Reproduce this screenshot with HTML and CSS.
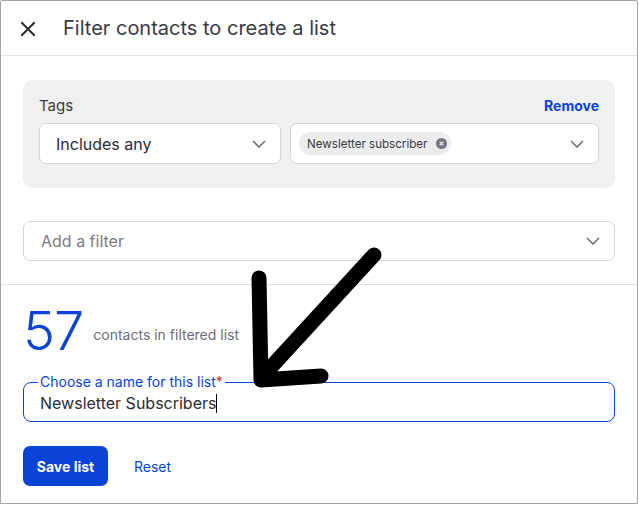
FILE: index.html
```html
<!DOCTYPE html>
<html>
<head>
<meta charset="utf-8">
<link rel="stylesheet" href="styles.css">
</head>
<body>
<div class="frame">
  <header class="header">
    <svg class="close" width="16" height="16" viewBox="0 0 16 16"><path d="M2 2 L14 14 M14 2 L2 14" stroke="#2b2b36" stroke-width="2" stroke-linecap="square"/></svg>
    <h1 class="title">Filter contacts to create a list</h1>
  </header>
  <section class="filters">
    <div class="card">
      <div class="card-head">
        <span class="card-label">Tags</span>
        <a class="link-bold">Remove</a>
      </div>
      <div class="card-row">
        <div class="select select-left">
          <span>Includes any</span>
          <svg class="chev" width="14" height="8" viewBox="0 0 14 8"><path d="M1 1 L7 7 L13 1" fill="none" stroke="#6f6f7a" stroke-width="1.6"/></svg>
        </div>
        <div class="select select-right">
          <span class="chip">Newsletter subscriber
            <svg class="chip-x" width="11" height="11" viewBox="0 0 12 12"><circle cx="6" cy="6" r="6" fill="#75757f"/><path d="M4 4 L8 8 M8 4 L4 8" stroke="#ececec" stroke-width="1.4"/></svg>
          </span>
          <svg class="chev" width="14" height="8" viewBox="0 0 14 8"><path d="M1 1 L7 7 L13 1" fill="none" stroke="#6f6f7a" stroke-width="1.6"/></svg>
        </div>
      </div>
    </div>
    <div class="select add-filter">
      <span>Add a filter</span>
      <svg class="chev" width="14" height="8" viewBox="0 0 14 8"><path d="M1 1 L7 7 L13 1" fill="none" stroke="#6f6f7a" stroke-width="1.6"/></svg>
    </div>
  </section>
  <section class="result">
    <div class="count-row">
      <span class="count">57</span>
      <span class="count-label">contacts in filtered list</span>
    </div>
    <fieldset class="name-field">
      <legend>Choose a name for this list<span class="req">*</span></legend>
      <div class="value">Newsletter Subscribers<span class="caret"></span></div>
    </fieldset>
    <div class="actions">
      <button class="btn-primary">Save list</button>
      <a class="link">Reset</a>
    </div>
  </section>
  <svg class="arrow" width="160" height="170" viewBox="0 0 160 170"><path d="M133 22 L20 145 M18 45 L20 147 L80 143" fill="none" stroke="#000" stroke-width="15" stroke-linecap="round" stroke-linejoin="round"/></svg>
</div>
</body>
</html>
```
FILE: styles.css
```css
* { box-sizing: border-box; }
html, body { margin: 0; padding: 0; background: #fff; }
body { font-family: Inter, "Open Sans", sans-serif; color: #2b2b36; }
.frame {
  position: relative;
  width: 638px;
  height: 504px;
  border: 1px solid #a4a4a4;
  border-radius: 2px 2px 0 0;
  background: #fff;
  overflow: hidden;
}
.header {
  height: 55px;
  display: flex;
  align-items: center;
  padding-left: 19px;
  border-bottom: 1px solid #e2e2e2;
}
.close { flex: none; margin-right: 27px; margin-top: 1px; }
.title { margin: 0; font-size: 20px; font-weight: 400; color: #3a3a44; letter-spacing: 0; }
.filters {
  padding: 24px 22px 23px 22px;
  border-bottom: 1px solid #e2e2e2;
}
.card {
  background: #f0f0f0;
  border-radius: 10px;
  padding: 15px 16px 24px 16px;
}
.card-head {
  display: flex;
  justify-content: space-between;
  align-items: center;
  height: 20px;
  margin-bottom: 8px;
}
.card-label { font-size: 15px; color: #3a3a44; }
.link-bold { color: #0a43d8; font-weight: 700; font-size: 14px; }
.card-row { display: flex; gap: 9px; }
.select {
  display: flex;
  align-items: center;
  justify-content: space-between;
  background: #fff;
  border: 1px solid #d6d6d9;
  border-radius: 7px;
  height: 41px;
}
.select-left { width: 242px; padding: 0 14px 0 16px; font-size: 16px; color: #2b2b36; }
.select-right { flex: 1; padding: 0 14px 0 8px; }
.chip {
  display: inline-flex;
  align-items: center;
  height: 23px;
  padding: 0 4px 0 8px;
  background: #ececec;
  border-radius: 12px;
  font-size: 11.6px;
  color: #3a3a44;
}
.chip-x { margin-left: 9px; }
.add-filter {
  margin-top: 33px;
  height: 40px;
  padding: 0 14px 0 17px;
  font-size: 16px;
  color: #7a7a86;
}
.result { padding: 18px 22px 0 22px; }
.count-row { display: flex; align-items: center; height: 56px; }
.count { font-size: 54px; font-weight: 300; color: #0a43d8; line-height: 1; margin-left: 0; letter-spacing: -1px; }
.count-label { font-size: 14px; color: #6d6d79; margin-left: 10px; margin-top: 6px; }
.name-field {
  margin: 15px 0 0 0;
  height: 48px;
  border: 1.5px solid #0a43d8;
  border-radius: 8px;
  padding: 0 16px 0 16px;
}
.name-field legend { font-size: 14px; color: #0a43d8; padding: 0 2px; margin-left: -2px; line-height: 16px; }
.req { color: #d93025; }
.value { font-size: 16px; color: #2b2b36; margin-top: 2px; line-height: 22px; }
.caret { display: inline-block; width: 1px; height: 19px; background: #000; vertical-align: -4px; }
.actions { display: flex; align-items: center; margin-top: 24px; gap: 26px; }
.btn-primary {
  height: 40px;
  width: 85px;
  border: none;
  border-radius: 7px;
  background: #0a43d8;
  color: #fff;
  font-family: inherit;
  font-weight: 700;
  font-size: 14px;
}
.link { color: #0a43d8; font-size: 14px; }
.arrow { position: absolute; left: 240px; top: 232px; }
```
